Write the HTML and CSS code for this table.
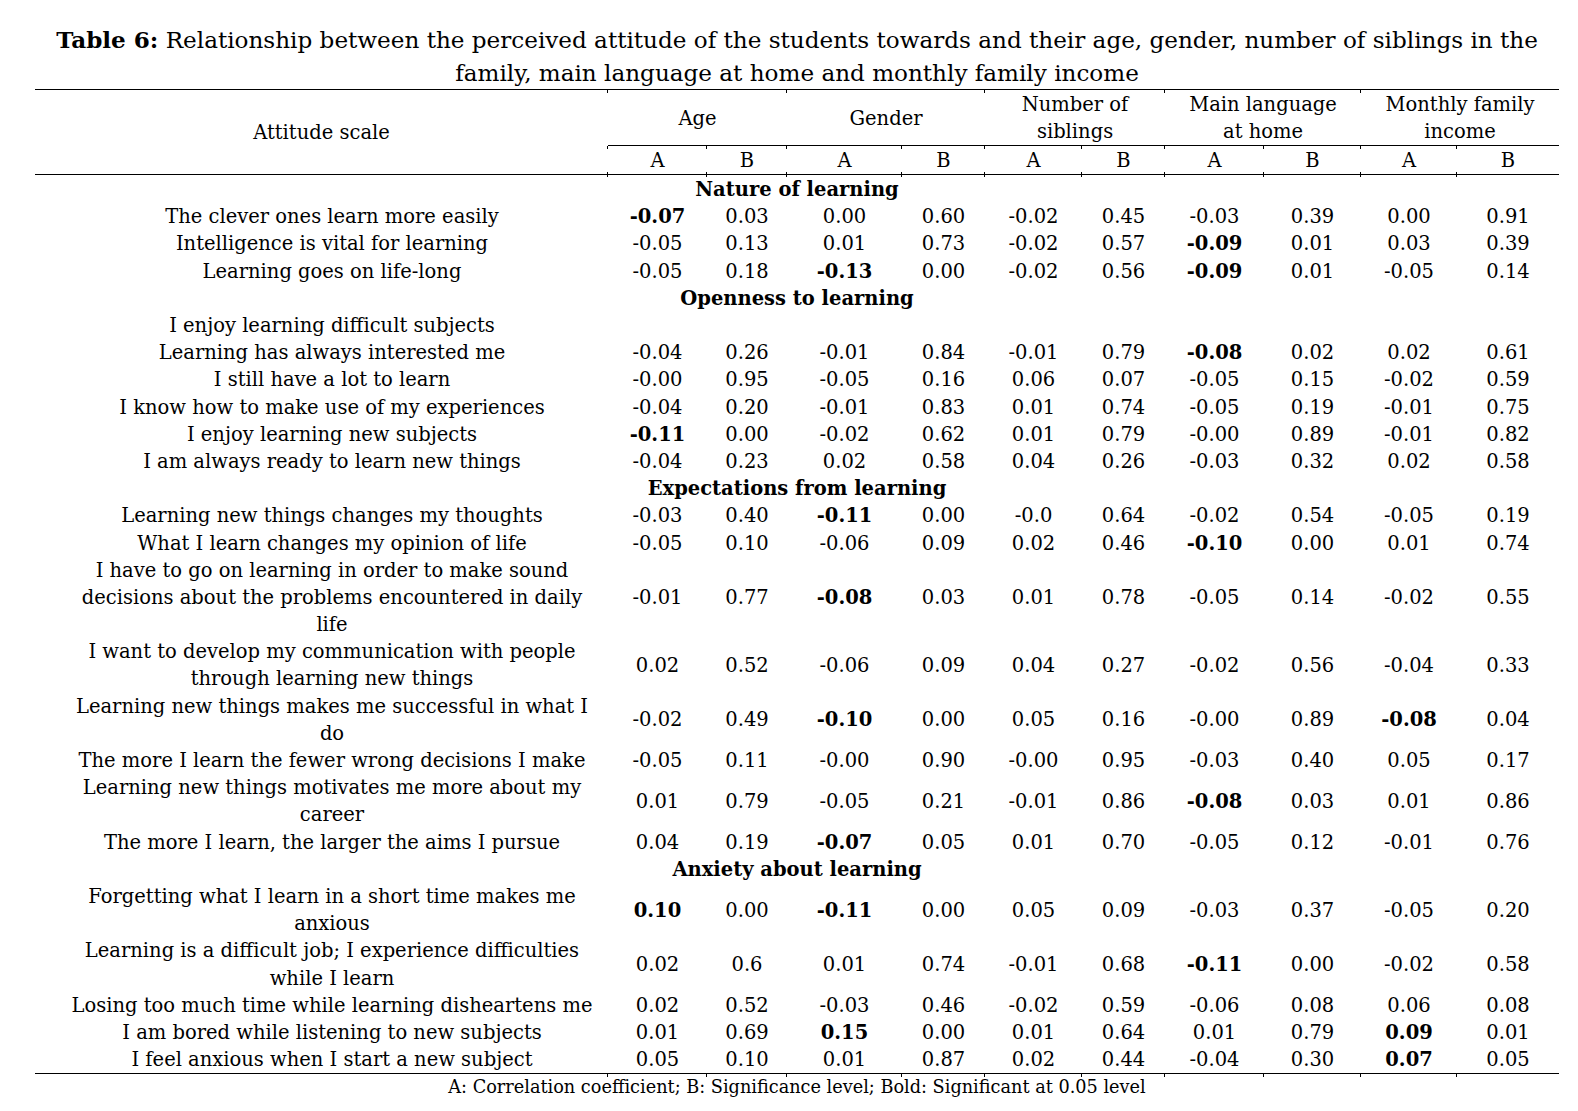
FILE: index.html
```html
<!DOCTYPE html>
<html lang="en">
<head>
<meta charset="utf-8">
<title>Table 6</title>
<link rel="stylesheet" href="styles.css">
</head>
<body>
<div class="page">
  <div class="caption"><b>Table 6:</b> Relationship between the perceived attitude of the students towards and their age, gender, number of siblings in the<br>family, main language at home and monthly family income</div>
  <table class="data-table">
    <colgroup>
      <col class="c-label">
      <col class="c1"><col class="c2"><col class="c3"><col class="c4"><col class="c5">
      <col class="c6"><col class="c7"><col class="c8"><col class="c9"><col class="c10">
    </colgroup>
    <thead>
      <tr class="head-1">
        <th rowspan="2" class="scale">Attitude scale</th>
        <th colspan="2" class="group">Age</th>
        <th colspan="2" class="group">Gender</th>
        <th colspan="2" class="group">Number of<br>siblings</th>
        <th colspan="2" class="group">Main language<br>at home</th>
        <th colspan="2" class="group">Monthly family<br>income</th>
      </tr>
      <tr class="head-2">
        <th class="sub">A</th><th class="sub">B</th>
        <th class="sub">A</th><th class="sub">B</th>
        <th class="sub">A</th><th class="sub">B</th>
        <th class="sub">A</th><th class="sub">B</th>
        <th class="sub">A</th><th class="sub last">B</th>
      </tr>
    </thead>
    <tbody>
      <tr class="section first"><td colspan="11">Nature of learning</td></tr>
      <tr><td class="label">The clever ones learn more easily</td><td><b>-0.07</b></td><td>0.03</td><td>0.00</td><td>0.60</td><td>-0.02</td><td>0.45</td><td>-0.03</td><td>0.39</td><td>0.00</td><td>0.91</td></tr>
      <tr><td class="label">Intelligence is vital for learning</td><td>-0.05</td><td>0.13</td><td>0.01</td><td>0.73</td><td>-0.02</td><td>0.57</td><td><b>-0.09</b></td><td>0.01</td><td>0.03</td><td>0.39</td></tr>
      <tr><td class="label">Learning goes on life-long</td><td>-0.05</td><td>0.18</td><td><b>-0.13</b></td><td>0.00</td><td>-0.02</td><td>0.56</td><td><b>-0.09</b></td><td>0.01</td><td>-0.05</td><td>0.14</td></tr>

      <tr class="section"><td colspan="11">Openness to learning</td></tr>
      <tr><td class="label">I enjoy learning difficult subjects</td><td></td><td></td><td></td><td></td><td></td><td></td><td></td><td></td><td></td><td></td></tr>
      <tr><td class="label">Learning has always interested me</td><td>-0.04</td><td>0.26</td><td>-0.01</td><td>0.84</td><td>-0.01</td><td>0.79</td><td><b>-0.08</b></td><td>0.02</td><td>0.02</td><td>0.61</td></tr>
      <tr><td class="label">I still have a lot to learn</td><td>-0.00</td><td>0.95</td><td>-0.05</td><td>0.16</td><td>0.06</td><td>0.07</td><td>-0.05</td><td>0.15</td><td>-0.02</td><td>0.59</td></tr>
      <tr><td class="label">I know how to make use of my experiences</td><td>-0.04</td><td>0.20</td><td>-0.01</td><td>0.83</td><td>0.01</td><td>0.74</td><td>-0.05</td><td>0.19</td><td>-0.01</td><td>0.75</td></tr>
      <tr><td class="label">I enjoy learning new subjects</td><td><b>-0.11</b></td><td>0.00</td><td>-0.02</td><td>0.62</td><td>0.01</td><td>0.79</td><td>-0.00</td><td>0.89</td><td>-0.01</td><td>0.82</td></tr>
      <tr><td class="label">I am always ready to learn new things</td><td>-0.04</td><td>0.23</td><td>0.02</td><td>0.58</td><td>0.04</td><td>0.26</td><td>-0.03</td><td>0.32</td><td>0.02</td><td>0.58</td></tr>

      <tr class="section"><td colspan="11">Expectations from learning</td></tr>
      <tr><td class="label">Learning new things changes my thoughts</td><td>-0.03</td><td>0.40</td><td><b>-0.11</b></td><td>0.00</td><td>-0.0</td><td>0.64</td><td>-0.02</td><td>0.54</td><td>-0.05</td><td>0.19</td></tr>
      <tr><td class="label">What I learn changes my opinion of life</td><td>-0.05</td><td>0.10</td><td>-0.06</td><td>0.09</td><td>0.02</td><td>0.46</td><td><b>-0.10</b></td><td>0.00</td><td>0.01</td><td>0.74</td></tr>
      <tr><td class="label">I have to go on learning in order to make sound<br>decisions about the problems encountered in daily<br>life</td><td>-0.01</td><td>0.77</td><td><b>-0.08</b></td><td>0.03</td><td>0.01</td><td>0.78</td><td>-0.05</td><td>0.14</td><td>-0.02</td><td>0.55</td></tr>
      <tr><td class="label">I want to develop my communication with people<br>through learning new things</td><td>0.02</td><td>0.52</td><td>-0.06</td><td>0.09</td><td>0.04</td><td>0.27</td><td>-0.02</td><td>0.56</td><td>-0.04</td><td>0.33</td></tr>
      <tr><td class="label">Learning new things makes me successful in what I<br>do</td><td>-0.02</td><td>0.49</td><td><b>-0.10</b></td><td>0.00</td><td>0.05</td><td>0.16</td><td>-0.00</td><td>0.89</td><td><b>-0.08</b></td><td>0.04</td></tr>
      <tr><td class="label">The more I learn the fewer wrong decisions I make</td><td>-0.05</td><td>0.11</td><td>-0.00</td><td>0.90</td><td>-0.00</td><td>0.95</td><td>-0.03</td><td>0.40</td><td>0.05</td><td>0.17</td></tr>
      <tr><td class="label">Learning new things motivates me more about my<br>career</td><td>0.01</td><td>0.79</td><td>-0.05</td><td>0.21</td><td>-0.01</td><td>0.86</td><td><b>-0.08</b></td><td>0.03</td><td>0.01</td><td>0.86</td></tr>
      <tr><td class="label">The more I learn, the larger the aims I pursue</td><td>0.04</td><td>0.19</td><td><b>-0.07</b></td><td>0.05</td><td>0.01</td><td>0.70</td><td>-0.05</td><td>0.12</td><td>-0.01</td><td>0.76</td></tr>

      <tr class="section"><td colspan="11">Anxiety about learning</td></tr>
      <tr><td class="label">Forgetting what I learn in a short time makes me<br>anxious</td><td><b>0.10</b></td><td>0.00</td><td><b>-0.11</b></td><td>0.00</td><td>0.05</td><td>0.09</td><td>-0.03</td><td>0.37</td><td>-0.05</td><td>0.20</td></tr>
      <tr><td class="label">Learning is a difficult job; I experience difficulties<br>while I learn</td><td>0.02</td><td>0.6</td><td>0.01</td><td>0.74</td><td>-0.01</td><td>0.68</td><td><b>-0.11</b></td><td>0.00</td><td>-0.02</td><td>0.58</td></tr>
      <tr><td class="label">Losing too much time while learning disheartens me</td><td>0.02</td><td>0.52</td><td>-0.03</td><td>0.46</td><td>-0.02</td><td>0.59</td><td>-0.06</td><td>0.08</td><td>0.06</td><td>0.08</td></tr>
      <tr><td class="label">I am bored while listening to new subjects</td><td>0.01</td><td>0.69</td><td><b>0.15</b></td><td>0.00</td><td>0.01</td><td>0.64</td><td>0.01</td><td>0.79</td><td><b>0.09</b></td><td>0.01</td></tr>
      <tr class="final"><td class="label">I feel anxious when I start a new subject</td><td>0.05</td><td>0.10</td><td>0.01</td><td>0.87</td><td>0.02</td><td>0.44</td><td>-0.04</td><td>0.30</td><td><b>0.07</b></td><td class="last">0.05</td></tr>
    </tbody>
  </table>
  <div class="footnote">A: Correlation coefficient; B: Significance level; Bold: Significant at 0.05 level</div>
</div>
</body>
</html>
```

FILE: styles.css
```css
* { box-sizing: border-box; }

body {
  margin: 0;
  background: #ffffff;
  color: #000000;
  font-family: "DejaVu Serif", "Liberation Serif", serif;
}

.page {
  width: 1524px;
  margin-left: 35px;
}

.caption {
  text-align: center;
  font-size: 23.1px;
  line-height: 32.6px;
  padding-top: 24px;
}

.caption b { font-weight: bold; }

.data-table {
  width: 1524px;
  border-collapse: collapse;
  table-layout: fixed;
  font-size: 19.5px;
  line-height: 27.18px;
}

.c-label { width: 573px; }
.c1 { width: 99px; }
.c2 { width: 80px; }
.c3 { width: 115px; }
.c4 { width: 83px; }
.c5 { width: 97px; }
.c6 { width: 83px; }
.c7 { width: 99px; }
.c8 { width: 97px; }
.c9 { width: 96px; }
.c10 { width: 102px; }

.data-table th,
.data-table td {
  padding: 0;
  text-align: center;
  vertical-align: middle;
  font-weight: normal;
  position: relative;
}

.data-table b { font-weight: bold; }

.head-1 th {
  border-top: 1px solid #000;
  line-height: 27px;
  padding-top: 1px;
}

.head-1 .group { border-bottom: 1px solid #000; }

.head-1 .scale { border-bottom: 1px solid #000; padding-top: 1px; }

.head-2 th {
  line-height: 26.4px;
  padding-top: 1.5px;
  border-bottom: 1px solid #000;
}

.head-1 .group::before,
.head-2 .sub::before,
.head-2 .sub::after,
.final td::after {
  content: "";
  position: absolute;
  left: -1px;
  width: 1px;
  background: #000;
}

.head-1 .group::before { top: 0; height: 3px; }
.head-2 .sub::before { top: 0; height: 3px; }
.head-2 .sub::after { bottom: -3px; height: 5px; }
.final td::after { bottom: -4px; height: 3px; }
.final td.label::after { display: none; }

.section td {
  font-weight: bold;
}

.section.first td {
  padding-top: 1px;
}

.data-table td.label {
  padding-left: 21px;
}

.final td {
  border-bottom: 1px solid #000;
}

.footnote {
  text-align: center;
  font-size: 17.7px;
  line-height: 27px;
}
```
